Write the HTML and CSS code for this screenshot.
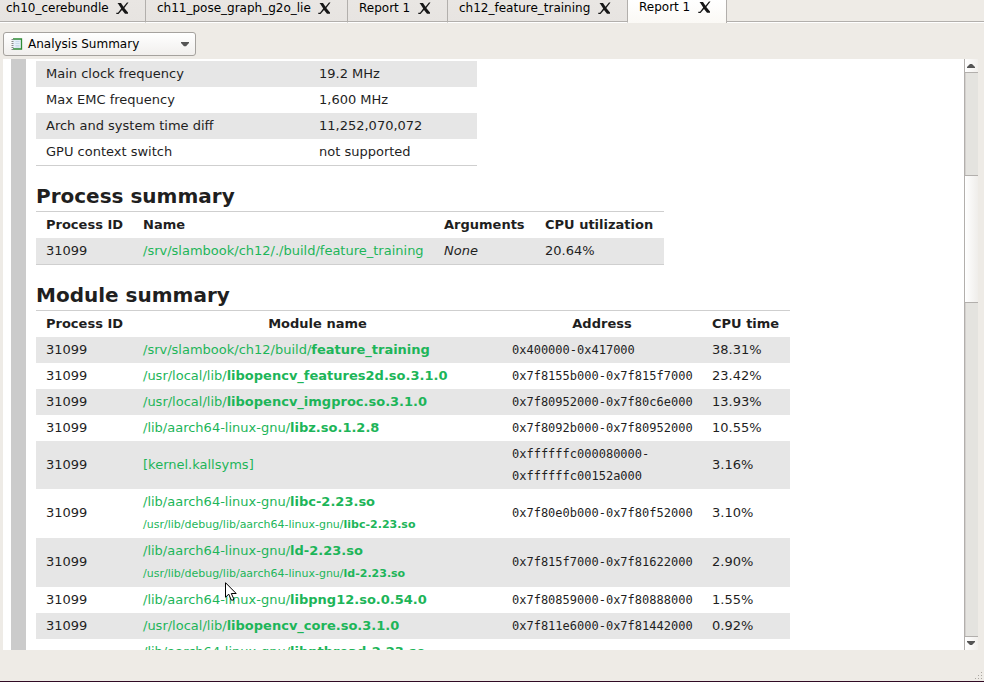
FILE: index.html
```
<!DOCTYPE html>
<html lang="en">
<head>
<meta charset="utf-8">
<title>Report 1</title>
<link rel="stylesheet" href="styles.css">
</head>
<body>
<svg class="defs" width="0" height="0"><defs>
<symbol id="close" viewBox="0 0 13 13"><path d="M1.500 1H5L7.500 4.800 11 .5h1.500L8.300 6 12 10.500v1.300H9L6 8 2.500 12H.3v-1.300H2L5.200 6.500 2.500 2.200z" fill="#161616"/></symbol>
</defs></svg>
<div class="window">
  <nav class="tabs">
    <div class="tab t1"><span>ch10_cerebundle</span><svg class="x"><use href="#close"/></svg></div>
    <div class="tab t2"><span>ch11_pose_graph_g2o_lie</span><svg class="x"><use href="#close"/></svg></div>
    <div class="tab t3"><span>Report 1</span><svg class="x"><use href="#close"/></svg></div>
    <div class="tab t4"><span>ch12_feature_training</span><svg class="x"><use href="#close"/></svg></div>
    <div class="tab active"><span>Report 1</span><svg class="x"><use href="#close"/></svg></div>
    <div class="rest"></div>
  </nav>
  <div class="toolbar">
    <div class="select">
      <svg class="book" width="12" height="12" viewBox="0 0 12 12"><rect x="1.500" y="1" width="9" height="10" fill="#e6eff9"/><path d="M2 1h8.500v10H2" fill="none" stroke="#2e8b35" stroke-width="1.300"/><path d="M4.500 3.500h4M4.500 5.500h4M4.500 7.500h4M4.500 9h4" stroke="#c3d4e6" stroke-width=".8"/><path d="M1.500 1v11" stroke="#888" stroke-width="2" stroke-dasharray="1 1"/></svg>
      <span>Analysis Summary</span>
      <svg class="arrow" width="8" height="5" viewBox="0 0 8 5"><path d="M0 0h8v1L5 4.2H3L0 1z" fill="#555"/></svg>
    </div>
  </div>
  <div class="main">
    <div class="page">
      <div class="ruler"></div>
      <div class="doc">
        <table class="info striped">
          <colgroup><col class="w273"><col class="w168"></colgroup>
          <tbody>
          <tr><td>Main clock frequency</td><td>19.2 MHz</td></tr>
          <tr><td>Max EMC frequency</td><td>1,600 MHz</td></tr>
          <tr><td>Arch and system time diff</td><td>11,252,070,072</td></tr>
          <tr><td>GPU context switch</td><td>not supported</td></tr>
          </tbody>
        </table>
        <h2>Process summary</h2>
        <table class="process striped">
          <colgroup><col class="w97"><col class="w301"><col class="w101"><col class="w129"></colgroup>
          <thead><tr><th>Process ID</th><th>Name</th><th>Arguments</th><th>CPU utilization</th></tr></thead>
          <tbody><tr><td>31099</td><td><a>/srv/slambook/ch12/./build/feature_training</a></td><td><i>None</i></td><td>20.64%</td></tr></tbody>
        </table>
        <h2>Module summary</h2>
        <table class="module striped">
          <colgroup><col class="w97"><col class="w369"><col class="w200"><col class="w88"></colgroup>
          <thead><tr><th>Process ID</th><th class="mid">Module name</th><th class="mid">Address</th><th>CPU time</th></tr></thead>
          <tbody>
          <tr><td>31099</td><td><a>/srv/slambook/ch12/build/<b>feature_training</b></a></td><td><code>0x400000-0x417000</code></td><td>38.31%</td></tr>
          <tr><td>31099</td><td><a>/usr/local/lib/<b>libopencv_features2d.so.3.1.0</b></a></td><td><code>0x7f8155b000-0x7f815f7000</code></td><td>23.42%</td></tr>
          <tr><td>31099</td><td><a>/usr/local/lib/<b>libopencv_imgproc.so.3.1.0</b></a></td><td><code>0x7f80952000-0x7f80c6e000</code></td><td>13.93%</td></tr>
          <tr><td>31099</td><td><a>/lib/aarch64-linux-gnu/<b>libz.so.1.2.8</b></a></td><td><code>0x7f8092b000-0x7f80952000</code></td><td>10.55%</td></tr>
          <tr class="kernel"><td>31099</td><td><a>[kernel.kallsyms]</a></td><td><code>0xffffffc000080000-<br>0xffffffc00152a000</code></td><td>3.16%</td></tr>
          <tr class="double"><td>31099</td><td><a>/lib/aarch64-linux-gnu/<b>libc-2.23.so</b></a><a class="debug">/usr/lib/debug/lib/aarch64-linux-gnu/<b>libc-2.23.so</b></a></td><td><code>0x7f80e0b000-0x7f80f52000</code></td><td>3.10%</td></tr>
          <tr class="double"><td>31099</td><td><a>/lib/aarch64-linux-gnu/<b>ld-2.23.so</b></a><a class="debug">/usr/lib/debug/lib/aarch64-linux-gnu/<b>ld-2.23.so</b></a></td><td><code>0x7f815f7000-0x7f81622000</code></td><td>2.90%</td></tr>
          <tr><td>31099</td><td><a>/lib/aarch64-linux-gnu/<b>libpng12.so.0.54.0</b></a></td><td><code>0x7f80859000-0x7f80888000</code></td><td>1.55%</td></tr>
          <tr><td>31099</td><td><a>/usr/local/lib/<b>libopencv_core.so.3.1.0</b></a></td><td><code>0x7f811e6000-0x7f81442000</code></td><td>0.92%</td></tr>
          <tr class="double"><td></td><td><a>/lib/aarch64-linux-gnu/<b>libpthread-2.23.so</b></a></td><td></td><td></td></tr>
          </tbody>
        </table>
      </div>
    </div>
    <div class="scroll">
      <div class="btn up"><svg width="8" height="4" viewBox="0 0 8 4"><path d="M0 4V3L3 0h2l3 3v1z" fill="#555"/></svg></div>
      <div class="track a"></div>
      <div class="thumb"></div>
      <div class="track b"></div>
      <div class="btn down"><svg width="8" height="4" viewBox="0 0 8 4"><path d="M0 0v1l3 3h2l3-3V0z" fill="#555"/></svg></div>
    </div>
  </div>
  <footer class="status">
    <svg width="8" height="8" viewBox="0 0 8 8"><path d="M6 0h1v1H6zM3 3h1v1H3zM6 3h1v1H6zM0 6h1v1H0zM3 6h1v1H3zM6 6h1v1H6z" fill="#aaa6a0"/></svg>
  </footer>
</div>
<svg class="cursor" width="13" height="20" viewBox="0 0 13 20"><path d="M.5.7v14.6l3.2-3.2 2.6 6h2.2v-1.8L6.3 11.500h4.900z" fill="#fff" stroke="#000"/></svg>
</body>
</html>
```
FILE: styles.css
```
* { box-sizing: border-box; }
body {
  margin: 0;
  font: 13px/16px "DejaVu Sans", sans-serif;
  color: #000;
  overflow: hidden;
}
.defs { position: absolute; }
.window {
  width: 984px;
  height: 682px;
  display: flex;
  flex-direction: column;
  background: #eeebe6;
  border-bottom: 1px solid #300a24;
}
.tabs { display: flex; height: 23px; flex: none; font-size: 12px; }
.tab, .rest { border-bottom: 1px solid #fff; box-shadow: inset 0 -1px #b2afac; }
.tab {
  display: flex;
  align-items: flex-start;
  justify-content: space-between;
  padding: 0 16px 0 11px;
  border-right: 1px solid #b2afac;
  background: linear-gradient(#e9e6e3, #e7e4e1);
  white-space: nowrap;
}
.t1 { width: 146px; padding-left: 6px; }
.t2 { width: 202px; }
.t3 { width: 100px; }
.t4 { width: 180px; }
.tab.active {
  width: 99px;
  padding-right: 15px;
  background: linear-gradient(#fff, #fbf9f5);
  border-bottom: 0;
  box-shadow: none;
}
.tab.active span { margin-top: -1px; }
.tab.active .x { margin-top: 1px; }
.rest { flex: 1; }
.x { width: 13px; height: 13px; margin-top: 2px; flex: none; }
.toolbar { height: 36px; padding: 9px 3px 0; flex: none; font-size: 12px; }
.select {
  display: flex;
  align-items: center;
  width: 193px;
  height: 24px;
  padding: 0 6px 0 7px;
  border: 1px solid #a5a29e;
  border-radius: 3px;
  background: linear-gradient(#fff, #f1efed);
}
.select span { margin-left: 5px; flex: 1; }
.main { display: flex; height: 591px; flex: none; padding: 0 6px 0 3px; }
.page { display: flex; width: 961px; padding-left: 8px; background: #fff; overflow: hidden; }
.ruler { width: 15px; flex: none; background: #cbcbcb; }
.doc { padding: 2px 0 0 10px; color: #1f1f1f; }
table { table-layout: fixed; border-collapse: separate; border-spacing: 0; border-bottom: 1px solid #cfcfcf; }
.info { width: 441px; }
.process { width: 628px; }
.module { width: 754px; }
.process, .module { border-top: 1px solid #cfcfcf; }
.w273 { width: 273px; }
.w168 { width: 168px; }
.w97 { width: 97px; }
.w301 { width: 301px; }
.w101 { width: 101px; }
.w129 { width: 129px; }
.w369 { width: 369px; }
.w200 { width: 200px; }
.w88 { width: 88px; }
td, th { height: 26px; padding: 0 0 0 10px; vertical-align: middle; text-align: left; white-space: nowrap; line-height: 22px; }
th.mid { text-align: center; padding: 0; }
.striped tbody tr:nth-child(odd) { background: #e6e6e6; }
.kernel td { height: 48px; }
.double td { height: 49px; padding-bottom: 2px; }
.double td:nth-child(2) { padding: 2px 0 0 10px; vertical-align: top; }
.double td:nth-child(3) { padding-bottom: 1px; }
a { color: #1db559; }
a.debug { display: block; font-size: 11px; line-height: 24px; }
code { display: block; font: 12px/22px "DejaVu Sans Mono", monospace; }
h2 { margin: 16px 0 0; height: 29px; font-size: 20px; line-height: 28px; }
.scroll { display: flex; flex-direction: column; width: 14px; border-left: 1px solid #b2afac; background: #e4e3df; }
.btn { display: flex; align-items: center; justify-content: center; height: 14px; flex: none; padding-right: 1px; background: linear-gradient(90deg, #fff, #f1efec); }
.up { border-bottom: 1px solid #b2afac; }
.down { border-top: 1px solid #b2afac; padding-bottom: 1px; }
.track { box-shadow: inset 1px 0 #d3d0cd; }
.track.a { height: 102px; }
.track.b { flex: 1; }
.thumb { height: 128px; border: solid #b2afac; border-width: 1px 0; background: linear-gradient(90deg, #fff, #efedea); }
.status { flex: 1; display: flex; align-items: flex-end; justify-content: flex-end; padding: 0 1px 1px; }
.cursor { position: absolute; left: 225px; top: 582px; }
```
